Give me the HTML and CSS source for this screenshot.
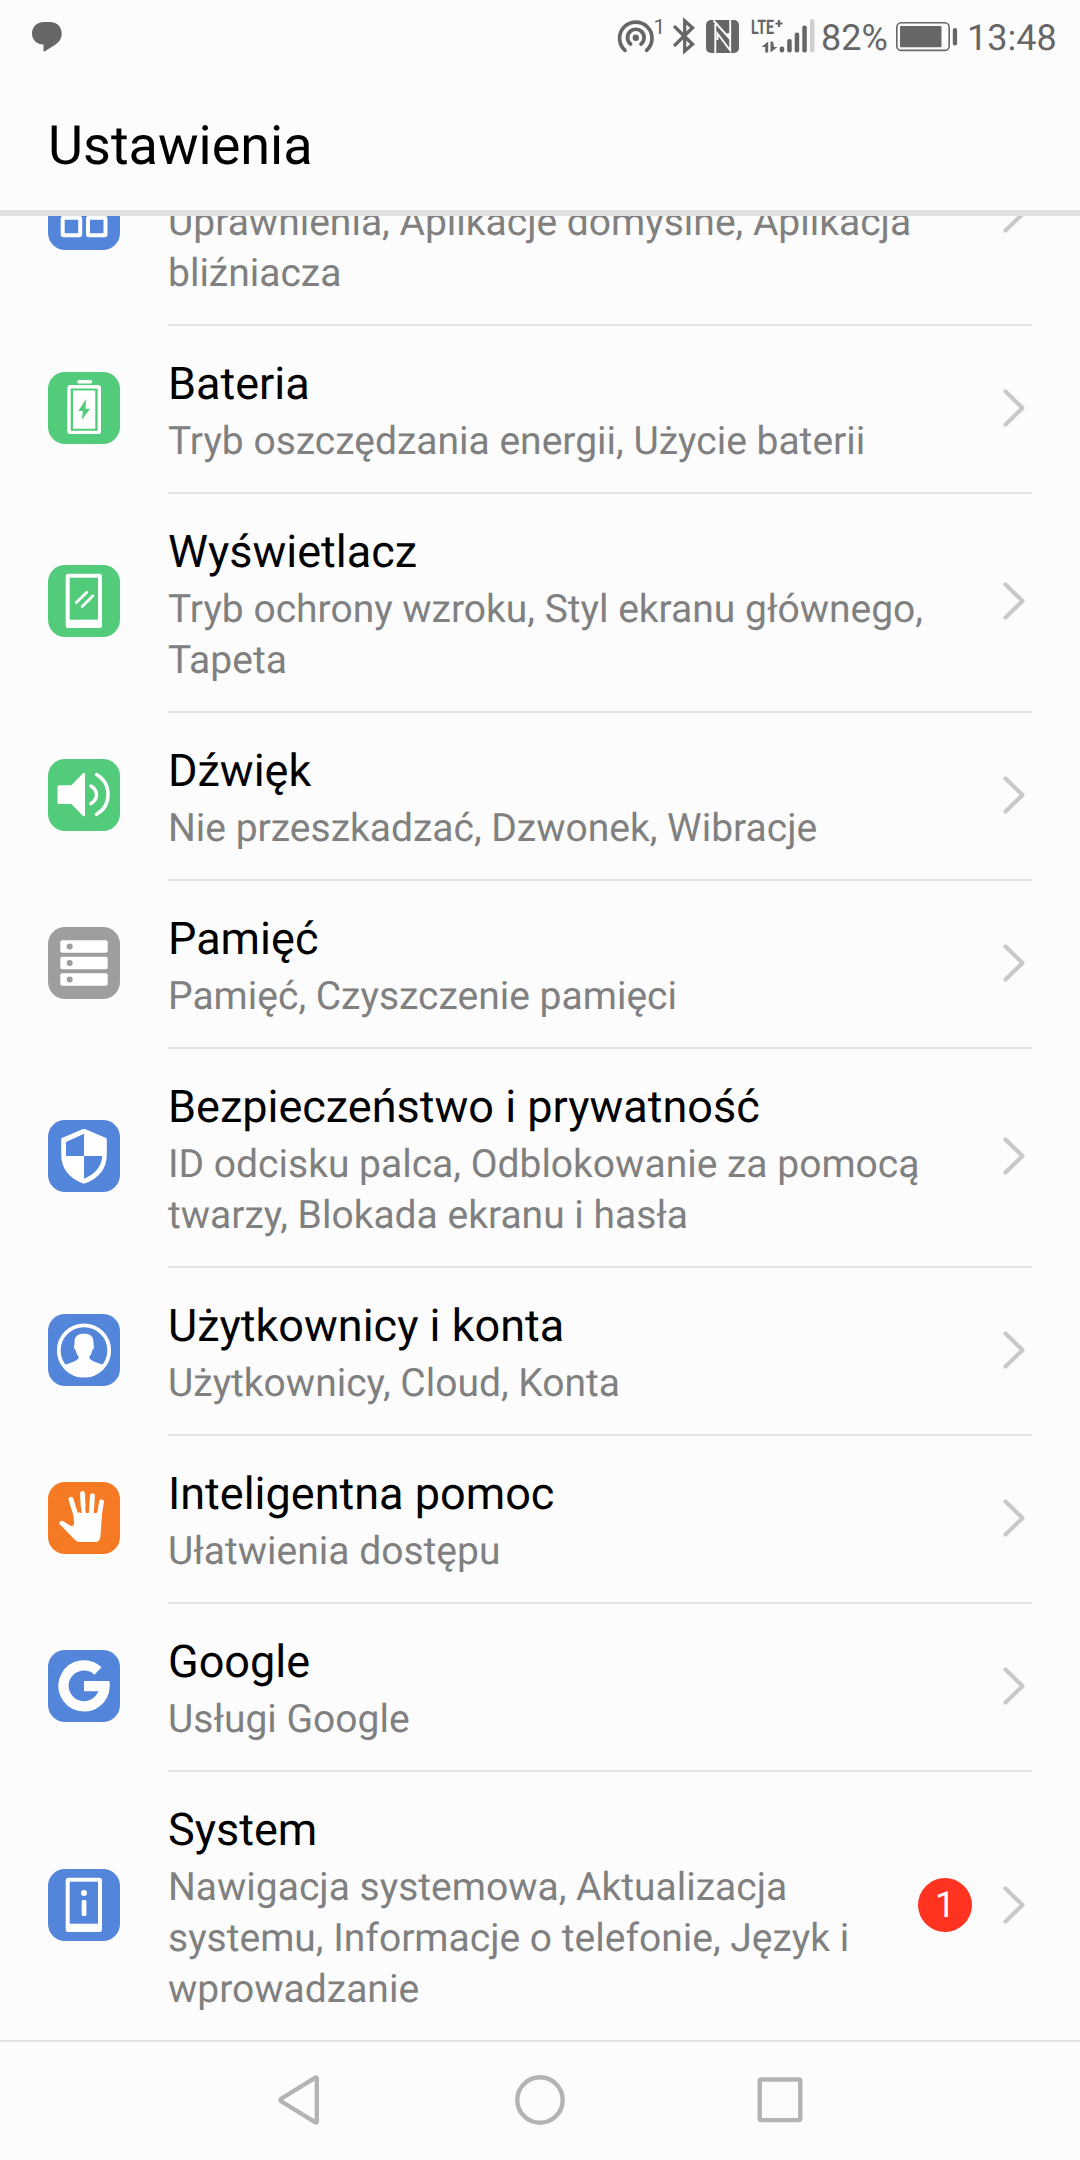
FILE: index.html
```
<!DOCTYPE html>
<html lang="pl">
<head>
  <meta charset="UTF-8">
  <title>Ustawienia</title>
  <link rel="stylesheet" href="styles.css">
</head>
<body>

  <div class="status-bar">
    <svg class="chat-icon" width="30" height="30" viewBox="0 0 30 30"><path d="M11.500 0h7C25 0 29.700 5 29.700 11.500c0 5.500-2.700 8.500-6.500 11.200L12.500 29.500q-1 .4-1-.8V22.500C5 22.500 0 18 0 11.500 0 5 5 0 11.500 0z"/></svg>

    <div class="status-right">
      <svg class="hotspot-icon" width="48" height="40" viewBox="0 0 48 40">
        <g fill="none" stroke="#666" stroke-width="3.700" stroke-linecap="round">
          <path d="M8 33.300A16.200 16.200 0 1 1 29.600 33.300"/>
          <path d="M13.600 27A8.300 8.300 0 1 1 24 27"/>
        </g>
        <circle cx="18.800" cy="20.700" r="3.200"/>
        <text x="36.500" y="16.800" font-size="21">1</text>
      </svg>
      <svg class="bluetooth-icon" width="22" height="36" viewBox="0 0 22 36"><path d="M2 9l17.500 17.200L11.700 33V3l7.800 6.800L2 27" fill="none" stroke="#666" stroke-width="3.300" stroke-linecap="round"/></svg>
      <svg class="nfc-icon" width="33" height="33" viewBox="0 0 33 33">
        <rect width="33" height="33" rx="5"/>
        <path d="M7.500.5L22.300 17v-4M9.300 33V4M24.200 0v30.500L11.500 13.500V20" fill="none" stroke="#fcfcfc" stroke-width="1.900"/>
      </svg>
      <svg class="signal-icon" width="64" height="34" viewBox="0 0 64 34">
        <text x="0" y="15" font-size="20" font-weight="bold" textLength="23" lengthAdjust="spacingAndGlyphs">LTE</text>
        <path d="M24.500 4.500h7M28 1v7" stroke="#666" stroke-width="2.200"/>
        <path d="M17.200 22.500v11h-3v-5.500h-3.700zM19.500 22.500v11l7-5.500h-3.500l-1-5.500z"/>
        <rect x="28.700" y="27.500" width="4.500" height="6" rx="2"/>
        <rect x="36.200" y="20" width="4.500" height="13.500" rx="2"/>
        <rect x="43.700" y="13.500" width="4.500" height="20" rx="2"/>
        <rect x="51.300" y="6.500" width="4.500" height="27" rx="2"/>
        <rect x="59" y="0" width="4.500" height="33.500" rx="2" fill="#d0d0d0"/>
      </svg>
      <span class="battery-level">82%</span>
      <svg class="battery-icon" width="62" height="30" viewBox="0 0 62 30">
        <rect x=".8" y=".8" width="52.400" height="27.600" rx="4.500" fill="none" stroke="#666" stroke-width="1.600"/>
        <rect x="4" y="4" width="41.500" height="21.200" rx="1"/>
        <rect x="56.800" y="6" width="4.300" height="17.500" rx="2"/>
      </svg>
      <span class="clock">13:48</span>
    </div>
  </div>

  <div class="header">
    <h1>Ustawienia</h1>
  </div>

  <div class="settings">
    <div class="row">
      <svg class="icon blue" viewBox="0 0 72 72">
        <g fill="none" stroke="#fff" stroke-width="4">
          <rect x="14.700" y="14.700" width="17.500" height="17.500" rx="1"/><rect x="40" y="14.700" width="17.500" height="17.500" rx="1"/>
          <rect x="14.700" y="39.700" width="17.500" height="17.500" rx="1"/><rect x="40" y="39.700" width="17.500" height="17.500" rx="1"/>
        </g>
      </svg>
      <div class="content">
        <div class="text">
          <p>Uprawnienia, Aplikacje domyślne, Aplikacja<br>bliźniacza</p>
        </div>
        <svg class="arrow" viewBox="0 0 22 38"><path d="M2.500 2.500L19.500 19 2.500 35.500"/></svg>
      </div>
    </div>

    <div class="row">
      <svg class="icon green" viewBox="0 0 72 72">
        <rect x="29.300" y="8" width="14.700" height="3.500" rx="1.500"/>
        <rect x="21" y="14.700" width="30.300" height="45.700" rx="1.500" fill="none" stroke="#fff" stroke-width="3.400"/>
        <rect x="25" y="18.500" width="22.300" height="38.200"/>
        <path d="M38 27l-7.700 12h4.500L34 48l8-11.300h-4.500z" fill="#52cc7a"/>
      </svg>
      <div class="content">
        <div class="text">
          <h2>Bateria</h2>
          <p>Tryb oszczędzania energii, Użycie baterii</p>
        </div>
        <svg class="arrow" viewBox="0 0 22 38"><path d="M2.500 2.500L19.500 19 2.500 35.500"/></svg>
      </div>
    </div>

    <div class="row">
      <svg class="icon green" viewBox="0 0 72 72">
        <rect x="17.700" y="8.700" width="36.300" height="54.300" rx="2.500"/>
        <rect x="21.700" y="12.700" width="28.300" height="42" fill="#52cc7a"/>
        <path d="M28.200 37.800L38.800 27.200M34.200 41.600L44.800 31" stroke="#fff" stroke-width="2.800" stroke-linecap="round"/>
      </svg>
      <div class="content">
        <div class="text">
          <h2>Wyświetlacz</h2>
          <p>Tryb ochrony wzroku, Styl ekranu głównego,<br>Tapeta</p>
        </div>
        <svg class="arrow" viewBox="0 0 22 38"><path d="M2.500 2.500L19.500 19 2.500 35.500"/></svg>
      </div>
    </div>

    <div class="row">
      <svg class="icon green" viewBox="0 0 72 72">
        <path d="M11 26.300h12.300L35 14.300q2-1.200 2 .8v41q0 2-2 .8L23.300 45H11q-1.500 0-1.500-1.500V27.800q0-1.500 1.500-1.500z"/>
        <path d="M43 27q5.500 3.500 5.500 8.800T43 44.600M48.500 15.500Q60 22 60 35.500T48.500 55.300" fill="none" stroke="#fff" stroke-width="3.500" stroke-linecap="round"/>
      </svg>
      <div class="content">
        <div class="text">
          <h2>Dźwięk</h2>
          <p>Nie przeszkadzać, Dzwonek, Wibracje</p>
        </div>
        <svg class="arrow" viewBox="0 0 22 38"><path d="M2.500 2.500L19.500 19 2.500 35.500"/></svg>
      </div>
    </div>

    <div class="row">
      <svg class="icon gray" viewBox="0 0 72 72">
        <rect x="12.300" y="13.300" width="47.400" height="12.500" rx="2"/>
        <rect x="12.300" y="29.800" width="47.400" height="12.500" rx="2"/>
        <rect x="12.300" y="46.200" width="47.400" height="12.500" rx="2"/>
        <g fill="#9e9e9e"><circle cx="21.700" cy="19.500" r="3"/><circle cx="21.700" cy="36" r="3"/><circle cx="21.700" cy="52.500" r="3"/></g>
      </svg>
      <div class="content">
        <div class="text">
          <h2>Pamięć</h2>
          <p>Pamięć, Czyszczenie pamięci</p>
        </div>
        <svg class="arrow" viewBox="0 0 22 38"><path d="M2.500 2.500L19.500 19 2.500 35.500"/></svg>
      </div>
    </div>

    <div class="row">
      <svg class="icon blue" viewBox="0 0 72 72">
        <path d="M34.500 9.300q1.500-.6 3 0l20 8.500q1.300.6 1.300 2V35c0 14-9 24-21.300 28.200q-1.500.4-3 0C22.200 59 13.200 49 13.200 35V19.800q0-1.400 1.300-2z"/>
        <path d="M36 13.700V36H18V22zM36 36h18.200C54 46.500 46 55 36 58.700z" fill="#5385db"/>
      </svg>
      <div class="content">
        <div class="text">
          <h2>Bezpieczeństwo i prywatność</h2>
          <p>ID odcisku palca, Odblokowanie za pomocą<br>twarzy, Blokada ekranu i hasła</p>
        </div>
        <svg class="arrow" viewBox="0 0 22 38"><path d="M2.500 2.500L19.500 19 2.500 35.500"/></svg>
      </div>
    </div>

    <div class="row">
      <svg class="icon blue" viewBox="0 0 72 72">
        <circle cx="36" cy="36.500" r="25.200" fill="none" stroke="#fff" stroke-width="3.800"/>
        <path d="M36 19.700c6 0 9.500 2.500 9.500 8.300v2.500q1.500 3-1 5.500-1 4.500-3 6.500v2q1.500 2 5 3.300l9 3.200C51.500 58 44.500 62 36 62S20.500 58 16.500 51l9-3.200q3.500-1.300 5-3.300v-2q-2-2-3-6.500-2.500-2.500-1-5.500V28c0-5.800 3.500-8.300 9.500-8.300z"/>
      </svg>
      <div class="content">
        <div class="text">
          <h2>Użytkownicy i konta</h2>
          <p>Użytkownicy, Cloud, Konta</p>
        </div>
        <svg class="arrow" viewBox="0 0 22 38"><path d="M2.500 2.500L19.500 19 2.500 35.500"/></svg>
      </div>
    </div>

    <div class="row">
      <svg class="icon orange" viewBox="0 0 72 72">
        <path d="M23 17.300L29 37M34.500 11.500L35.700 36M44.500 13.700L43 36M53.500 19.800L50.500 38M14 41.300L26 49.500" stroke="#fff" stroke-width="4.900" stroke-linecap="round"/>
        <path d="M25.500 30.500h27.300l1.200 2-1.500 21.500q-.5 6-5 6H32q-3 0-5.500-2.500L12.800 43.300l3.200-3 6.500 3.500q3.500 1.200 3.500-2.500z"/>
        <path d="M30.800 25l1.600 6h1.200L33 25zM37.500 25l.2 6h2.600l.7-6zM46.500 25l-.7 6h2.600l1.300-6z" fill="#f57a23"/>
      </svg>
      <div class="content">
        <div class="text">
          <h2>Inteligentna pomoc</h2>
          <p>Ułatwienia dostępu</p>
        </div>
        <svg class="arrow" viewBox="0 0 22 38"><path d="M2.500 2.500L19.500 19 2.500 35.500"/></svg>
      </div>
    </div>

    <div class="row">
      <svg class="icon blue" viewBox="0 0 72 72">
        <path d="M50 20.900A20.500 20.500 0 1 0 56.500 35.500" fill="none" stroke="#fff" stroke-width="10.300"/>
        <path d="M36 31h25.300q.6 2.500.4 5.500l-5 4.800H36z"/>
      </svg>
      <div class="content">
        <div class="text">
          <h2>Google</h2>
          <p>Usługi Google</p>
        </div>
        <svg class="arrow" viewBox="0 0 22 38"><path d="M2.500 2.500L19.500 19 2.500 35.500"/></svg>
      </div>
    </div>

    <div class="row">
      <svg class="icon blue" viewBox="0 0 72 72">
        <rect x="17.700" y="8.700" width="36.300" height="54.300" rx="2.500"/>
        <rect x="21.700" y="12.700" width="28.300" height="42" fill="#5385db"/>
        <circle cx="36" cy="24" r="3"/>
        <rect x="33.700" y="31" width="4.700" height="16" rx="1"/>
      </svg>
      <div class="content">
        <div class="text">
          <h2>System</h2>
          <p>Nawigacja systemowa, Aktualizacja<br>systemu, Informacje o telefonie, Język i<br>wprowadzanie</p>
        </div>
        <span class="badge">1</span>
        <svg class="arrow" viewBox="0 0 22 38"><path d="M2.500 2.500L19.500 19 2.500 35.500"/></svg>
      </div>
    </div>
  </div>

  <div class="nav-bar">
    <svg viewBox="0 0 60 60"><path d="M45 7.800q1.800-1 1.800 1v42.400q0 2-1.800 1L11.500 31.500q-2-1.500 0-3z"/></svg>
    <svg viewBox="0 0 60 60"><circle cx="30" cy="30" r="22.700"/></svg>
    <svg viewBox="0 0 60 60"><rect x="9.700" y="9.500" width="40.600" height="40.600" rx="1.500"/></svg>
  </div>

</body>
</html>
```

FILE: styles.css
```
body {
  display: flex;
  flex-direction: column;
  width: 1080px;
  height: 2160px;
  margin: 0;
  overflow: hidden;
  font-family: Roboto, sans-serif;
  text-rendering: geometricPrecision;
  background: #fcfcfc;
}

h1, h2, p {
  margin: 0;
  font-weight: 400;
}

svg {
  display: block;
  flex-shrink: 0;
  overflow: visible;
}

/* status bar */
.status-bar {
  display: flex;
  justify-content: space-between;
  align-items: flex-start;
  height: 72px;
  padding: 0 25px 0 32px;
  color: #666;
  fill: #666;
}

.chat-icon {
  margin-top: 22px;
}

.status-right {
  display: flex;
  align-items: flex-start;
  font-size: 36px;
  line-height: 42px;
}

.hotspot-icon {
  margin: 17px 8px 0 0;
}

.bluetooth-icon {
  margin: 18px 11px 0 0;
}

.nfc-icon {
  margin: 20px 12px 0 0;
}

.signal-icon {
  margin: 19px 6px 0 0;
}

.battery-level {
  width: 75px;
  margin-top: 17px;
}

.battery-icon {
  margin: 22px 9px 0 0;
}

.clock {
  width: 88px;
  margin-top: 17px;
}

/* header */
.header {
  height: 138px;
  padding-left: 48px;
  border-bottom: 6px solid #e0e0e0;
}

h1 {
  padding-top: 43px;
  font-size: 54px;
  line-height: 64px;
  color: #000;
}

/* list, scrolled part of the way down */
.settings {
  flex: 1;
  overflow: hidden;
}

.row {
  display: flex;
  align-items: center;
  padding: 0 48px;
}

.icon {
  width: 72px;
  height: 72px;
  margin: 0 48px 5px 0;
  border-radius: 17px;
  fill: #fff;
}

.blue {
  background: #5385db;
}

.green {
  background: #52cc7a;
}

.gray {
  background: #9e9e9e;
}

.orange {
  background: #f57a23;
}

.content {
  display: flex;
  flex: 1;
  align-items: center;
  padding-right: 7px;
  border-bottom: 2px solid #e3e3e3;
}

.text {
  flex: 1;
  padding: 31px 0 25px;
  white-space: nowrap;
}

/* the title of the first row is scrolled away under the header */
.row:first-child {
  margin-top: -109px;
}

.row:first-child .text {
  padding-top: 90px;
}

h2 {
  margin-bottom: 6px;
  font-size: 45px;
  line-height: 53px;
  color: #000;
}

p {
  font-size: 39px;
  line-height: 51px;
  color: #808080;
}

.arrow {
  width: 22px;
  height: 38px;
  margin-bottom: 3px;
  fill: none;
  stroke: #c8c8c8;
  stroke-width: 4.2;
  stroke-linecap: round;
  stroke-linejoin: round;
}

.badge {
  width: 54px;
  height: 54px;
  margin: 0 31px 2px 0;
  border-radius: 50%;
  background: #ff3320;
  color: #fff;
  font-size: 36px;
  line-height: 55px;
  text-align: center;
}

/* navigation bar */
.nav-bar {
  display: flex;
  align-items: center;
  height: 116px;
  padding: 0 180px 2px;
  border-top: 2px solid #e3e3e3;
}

.nav-bar svg {
  flex: 1;
  height: 60px;
  fill: none;
  stroke: #b3b3b3;
  stroke-width: 4.4;
  stroke-linejoin: round;
}
```
